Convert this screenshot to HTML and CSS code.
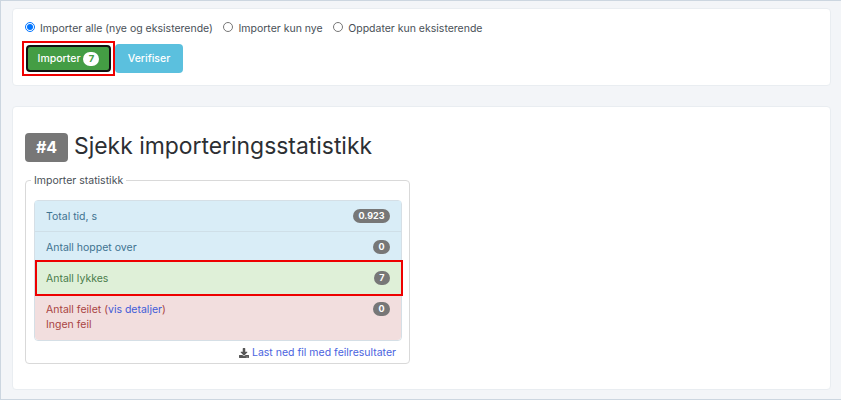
FILE: index.html
```html
<!DOCTYPE html>
<html lang="no">
<head>
    <meta charset="UTF-8">
    <title>Importer</title>
    <link rel="stylesheet" href="styles.css">
</head>
<body>
    <div class="card card-options">
        <div class="radio-row">
            <label class="radio-item"><input type="radio" name="mode" checked> Importer alle (nye og eksisterende)</label>
            <label class="radio-item"><input type="radio" name="mode"> Importer kun nye</label>
            <label class="radio-item"><input type="radio" name="mode"> Oppdater kun eksisterende</label>
        </div>
        <div class="button-row">
            <div class="highlight highlight-button">
                <button class="btn btn-import">Importer <span class="btn-badge">7</span></button>
            </div>
            <button class="btn btn-verify">Verifiser</button>
        </div>
    </div>
    <div class="card card-stats">
        <h2 class="step-title"><span class="step-label">#4</span> Sjekk importeringsstatistikk</h2>
        <fieldset class="stats-box">
            <legend>Importer statistikk</legend>
            <ul class="stats-list">
                <li class="stat stat-info"><span>Total tid, s</span><span class="badge">0.923</span></li>
                <li class="stat stat-info stat-last"><span>Antall hoppet over</span><span class="badge">0</span></li>
                <li class="stat stat-success"><span>Antall lykkes</span><span class="badge">7</span></li>
                <li class="stat stat-danger">
                    <span>Antall feilet (<a href="#">vis detaljer</a>)<br>Ingen feil</span>
                    <span class="badge">0</span>
                </li>
            </ul>
            <div class="download-row">
                <svg class="download-icon" viewBox="0 0 512 512"><path d="M216 0h80c13 0 24 11 24 24v168h88c18 0 27 21 14 34L270 378c-8 8-20 8-28 0L90 226c-13-13-4-34 14-34h88V24c0-13 11-24 24-24zm296 376v112c0 13-11 24-24 24H24c-13 0-24-11-24-24V376c0-13 11-24 24-24h147l49 49c20 20 52 20 72 0l49-49h147c13 0 24 11 24 24zm-124 88c0-11-9-20-20-20s-20 9-20 20 9 20 20 20 20-9 20-20zm64 0c0-11-9-20-20-20s-20 9-20 20 9 20 20 20 20-9 20-20z"/></svg>
                <a href="#">Last ned fil med feilresultater</a>
            </div>
        </fieldset>
    </div>
</body>
</html>
```

FILE: styles.css
```css
html {
    height: 100%;
}
body {
    box-sizing: border-box;
    width: 841px;
    height: 400px;
    margin: 0;
    padding: 7px 10px 0 11px;
    overflow: hidden;
    font-family: Inter, "Noto Sans", sans-serif;
    font-size: 10.5px;
    color: #495057;
    background-color: #f3f5f8;
    border-top: 1px solid #ccd6e0;
    border-left: 1px solid #ccd6e0;
    border-bottom: 1px solid #ccd6e0;
}
.card {
    box-sizing: border-box;
    background-color: #fff;
    border: 1px solid #e9edf1;
    border-radius: 4px;
}
.card-options {
    height: 78px;
    padding: 11px 12px 0;
}
.card-stats {
    height: 284px;
    margin-top: 20px;
    padding: 26px 12px 0;
}
.radio-row {
    display: flex;
    gap: 10.5px;
    height: 16px;
    align-items: center;
}
.radio-item {
    display: flex;
    align-items: center;
    gap: 5px;
}
.radio-item input {
    width: 10px;
    height: 10px;
    margin: 0 0 2px;
}
.button-row {
    display: flex;
    align-items: center;
    margin-top: 5px;
    margin-left: -3px;
}
.highlight {
    border: 2px solid #ee0000;
}
.highlight-button {
    padding: 2px;
}
.btn {
    box-sizing: border-box;
    height: 29px;
    padding: 0;
    border: none;
    border-radius: 4px;
    color: #fff;
    font-family: inherit;
    font-size: 10.5px;
    font-weight: 500;
}
.btn-import {
    display: flex;
    align-items: center;
    justify-content: center;
    gap: 3px;
    width: 85px;
    height: 27px;
    background-color: #449d44;
    border: 2px solid #111;
}
.btn-badge {
    width: 16px;
    height: 14px;
    line-height: 14px;
    border-radius: 7px;
    background-color: #fff;
    color: #449d44;
    font-size: 9.5px;
    font-weight: 700;
}
.btn-verify {
    width: 68px;
    background-color: #5bc0de;
}
.step-title {
    display: flex;
    align-items: flex-start;
    gap: 6px;
    margin: 0;
    height: 29px;
    font-size: 22.9px;
    font-weight: 400;
    line-height: 27px;
    color: #2c2f33;
}
.step-label {
    width: 43px;
    height: 29px;
    line-height: 29px;
    border-radius: 4px;
    background-color: #777;
    color: #fff;
    font-size: 16px;
    font-weight: 700;
    text-align: center;
}
.stats-box {
    box-sizing: border-box;
    width: 385px;
    height: 190px;
    margin: 12px 0 0;
    padding: 13px 7px 0 8px;
    border: 1px solid #d9d9d9;
    border-radius: 4px;
}
.stats-box legend {
    padding: 0 3px;
    margin-left: -3px;
    line-height: 13px;
}
.stats-list {
    list-style: none;
    margin: 0;
    padding: 0;
    border: 1px solid #d5dfe6;
    border-radius: 4px;
}
.stat {
    display: flex;
    justify-content: space-between;
    box-sizing: border-box;
    padding: 0 11px;
    height: 31px;
    align-items: center;
}
.stat-info {
    background-color: #d9edf7;
    color: #3f7391;
    border-bottom: 1px solid #cfdfe8;
}
.stat-last {
    height: 30px;
    border-bottom: none;
}
.stat-success {
    background-color: #dff0d8;
    color: #4a7c4b;
    height: 36px;
    margin: -2px -2px 0 0;
    padding: 0 11px 0 9px;
    border: 2px solid #ee0000;
    position: relative;
}
.stat-danger {
    background-color: #f2dede;
    color: #a94442;
    height: 44px;
    align-items: flex-start;
    padding-top: 6px;
    line-height: 15px;
    border-radius: 0 0 4px 4px;
}
.stat-danger a {
    color: #3f5bd8;
    text-decoration: none;
}
.badge {
    padding: 0 5.5px;
    height: 14px;
    line-height: 14px;
    border-radius: 7px;
    background-color: #777;
    color: #fff;
    font-size: 9px;
    font-weight: 700;
}
.download-row {
    display: flex;
    justify-content: flex-end;
    align-items: center;
    gap: 3px;
    margin-top: 5px;
    padding-right: 6px;
}
.download-row a {
    color: #4a63e0;
    text-decoration: none;
}
.download-icon {
    width: 10px;
    height: 10px;
    fill: #555;
}
```
